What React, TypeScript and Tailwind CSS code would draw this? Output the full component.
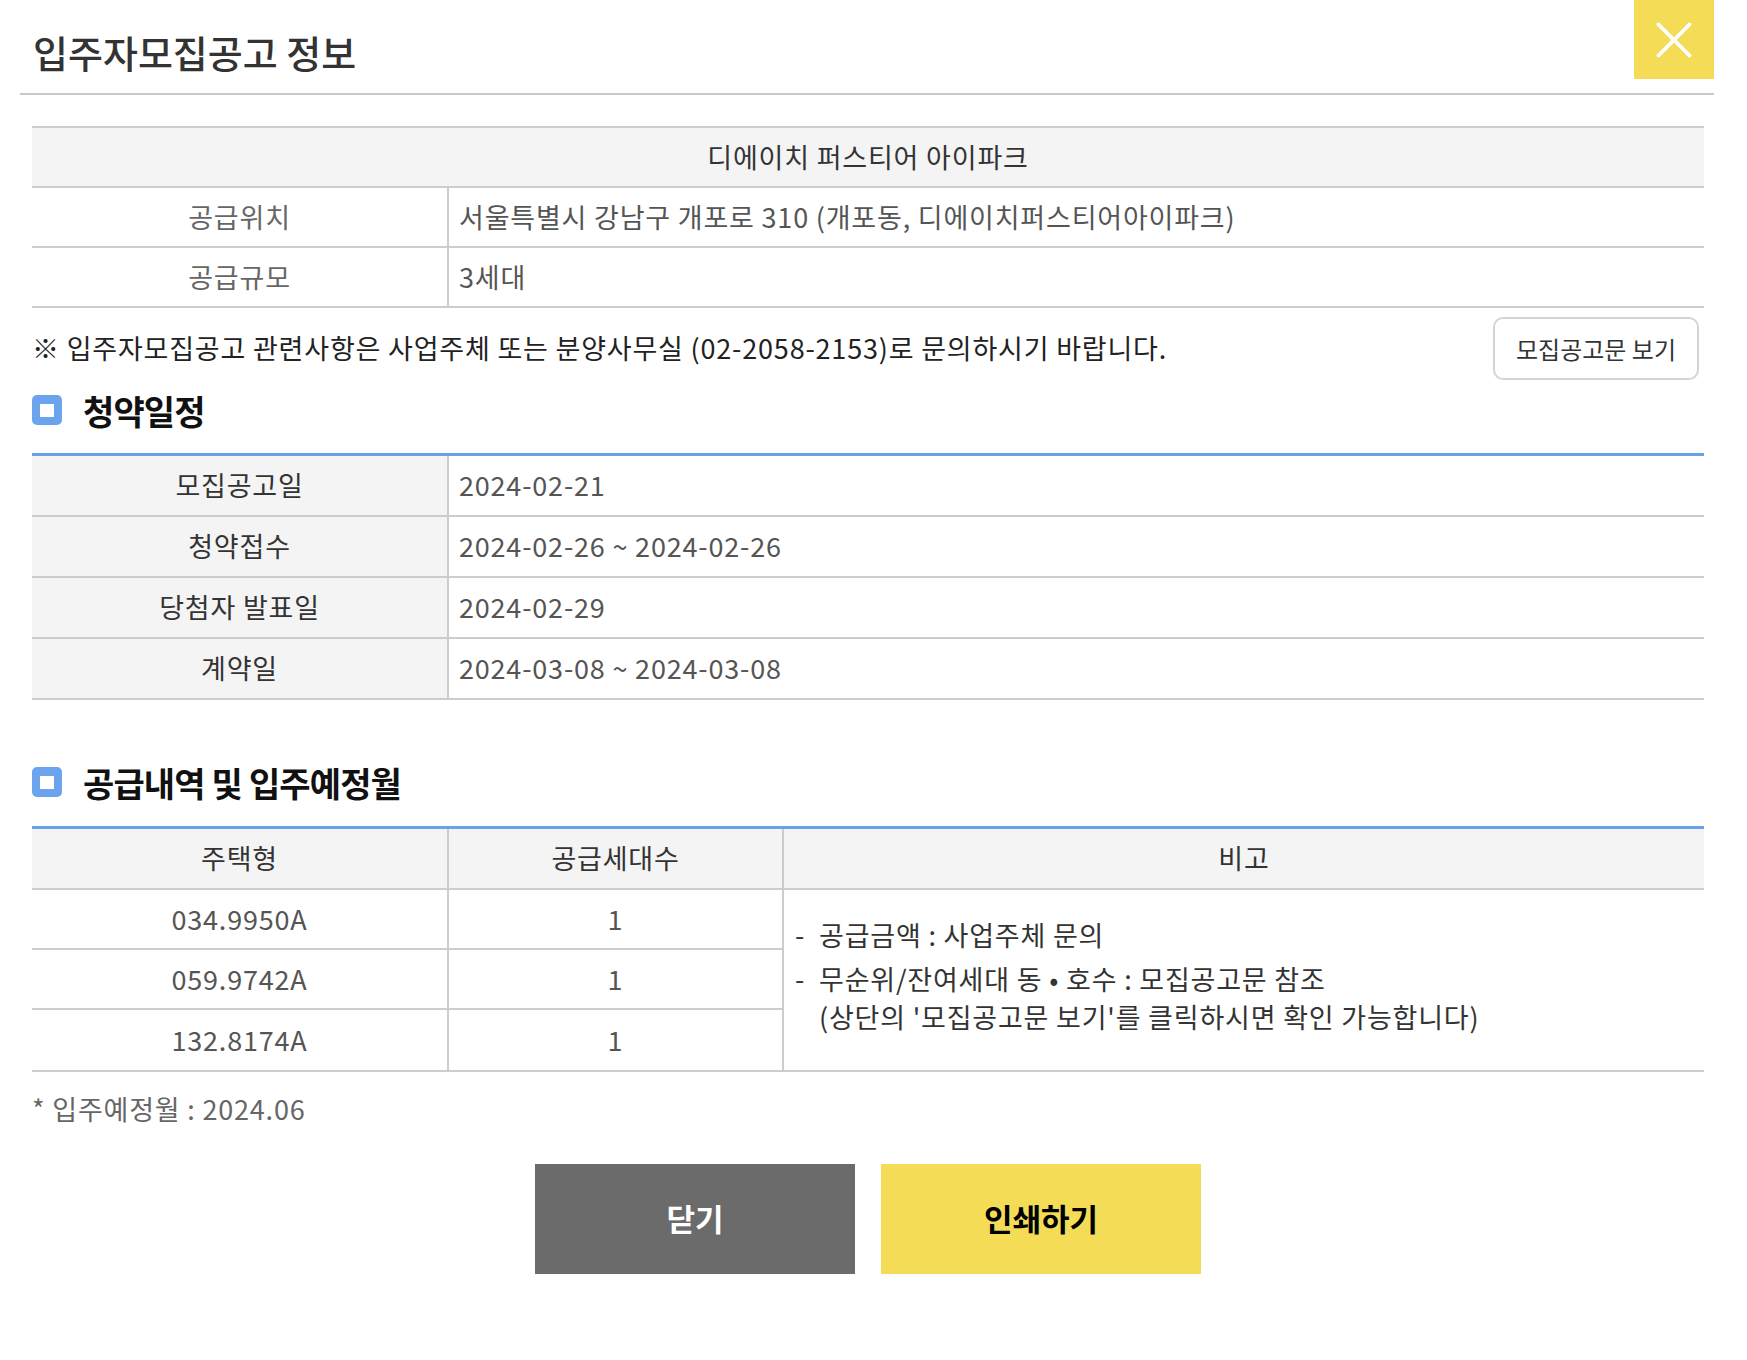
import { X } from "lucide-react";

const schedule = [
  { label: "모집공고일", value: "2024-02-21" },
  { label: "청약접수", value: "2024-02-26 ~ 2024-02-26" },
  { label: "당첨자 발표일", value: "2024-02-29" },
  { label: "계약일", value: "2024-03-08 ~ 2024-03-08" },
];

const supply = [
  { type: "034.9950A", count: "1" },
  { type: "059.9742A", count: "1" },
  { type: "132.8174A", count: "1" },
];

function SectionTitle({ children }: { children: React.ReactNode }) {
  return (
    <div className="flex h-[30px] items-center gap-[21px]">
      <span className="flex size-[30px] items-center justify-center rounded-[5px] bg-[#6ba4ec]">
        <span className="h-[13px] w-[14px] bg-white" />
      </span>
      <h2 className="text-[34px] font-bold tracking-[-0.025em] text-[#111]">{children}</h2>
    </div>
  );
}

export default function App() {
  return (
    <div className="min-h-[1360px] w-[1747px] bg-white font-['Noto_Sans_CJK_KR','Noto_Sans',sans-serif] text-[#333]">
      {/* Header */}
      <header className="ml-[20px] flex h-[95px] w-[1694px] items-start justify-between border-b-2 border-[#c8c8c8]">
        <h1 className="pl-[13px] pt-[24px] text-[38px] font-medium leading-[56px] tracking-normal text-[#333]">
          입주자모집공고 정보
        </h1>
        <button className="flex h-[79px] w-[80px] items-center justify-center bg-[#f4dc56]" aria-label="닫기">
          <X className="size-[62px] text-white" strokeWidth={1.5} />
        </button>
      </header>

      <main className="ml-[32px] w-[1672px] pt-[31px]">
        {/* Complex info */}
        <div className="border-t-2 border-[#cccccc] text-[27px] tracking-[0.8px]">
          <div className="flex h-[60px] items-center justify-center border-b-2 border-[#cccccc] bg-[#f4f4f4] text-[#333]">
            디에이치 퍼스티어 아이파크
          </div>
          <div className="flex h-[60px] border-b-2 border-[#cccccc]">
            <div className="flex w-[417px] items-center justify-center border-r-2 border-[#cccccc] text-[#666]">공급위치</div>
            <div className="flex flex-1 items-center pl-[10px] text-[#555]">
              서울특별시 강남구 개포로 310 (개포동, 디에이치퍼스티어아이파크)
            </div>
          </div>
          <div className="flex h-[60px] border-b-2 border-[#cccccc]">
            <div className="flex w-[417px] items-center justify-center border-r-2 border-[#cccccc] text-[#666]">공급규모</div>
            <div className="flex flex-1 items-center pl-[10px] text-[#555]">3세대</div>
          </div>
        </div>

        {/* Notice */}
        <div className="mt-[9px] flex items-center justify-between pr-[5px]">
          <p className="text-[27px] tracking-[0.8px] text-[#222]">
            ※ 입주자모집공고 관련사항은 사업주체 또는 분양사무실 (02-2058-2153)로 문의하시기 바랍니다.
          </p>
          <button className="h-[63px] w-[206px] rounded-[10px] border-2 border-[#d4d4d4] bg-white text-[24px] tracking-normal text-[#333]">
            모집공고문 보기
          </button>
        </div>

        {/* Schedule */}
        <div className="mt-[15px]">
          <SectionTitle>청약일정</SectionTitle>
        </div>
        <div className="mt-[28px] border-t-[3px] border-[#6aa1e8] text-[27px] tracking-[0.8px]">
          {schedule.map((row) => (
            <div key={row.label} className="flex h-[61px] border-b-2 border-[#cccccc]">
              <div className="flex w-[417px] items-center justify-center border-r-2 border-[#cccccc] bg-[#f4f4f4] text-[#333]">
                {row.label}
              </div>
              <div className="flex flex-1 items-center pl-[10px] text-[#555]">{row.value}</div>
            </div>
          ))}
        </div>

        {/* Supply */}
        <div className="mt-[67px]">
          <SectionTitle>공급내역 및 입주예정월</SectionTitle>
        </div>
        <div className="mt-[29px] border-t-[3px] border-[#6aa1e8] text-[27px] tracking-[0.8px]">
          <div className="flex h-[61px] border-b-2 border-[#cccccc] bg-[#f4f4f4] text-[#333]">
            <div className="flex w-[417px] items-center justify-center border-r-2 border-[#cccccc]">주택형</div>
            <div className="flex w-[335px] items-center justify-center border-r-2 border-[#cccccc]">공급세대수</div>
            <div className="flex flex-1 items-center justify-center">비고</div>
          </div>
          <div className="flex border-b-2 border-[#cccccc]">
            <div className="w-[752px] border-r-2 border-[#cccccc]">
              {supply.map((row, i) => (
                <div
                  key={row.type}
                  className={`flex h-[60px] text-[#555] ${i < supply.length - 1 ? "border-b-2 border-[#cccccc]" : ""}`}
                >
                  <div className="flex w-[417px] items-center justify-center border-r-2 border-[#cccccc]">{row.type}</div>
                  <div className="flex flex-1 items-center justify-center">{row.count}</div>
                </div>
              ))}
            </div>
            <div className="flex flex-1 flex-col justify-center pb-[9px] pl-[11px] leading-[38px] text-[#333]">
              <div className="flex">
                <span className="w-[24px]">-</span>
                <span>공급금액 : 사업주체 문의</span>
              </div>
              <div className="mt-[6px] flex">
                <span className="w-[24px]">-</span>
                <span>
                  무순위/잔여세대 동 • 호수 : 모집공고문 참조
                  <br />
                  (상단의 '모집공고문 보기'를 클릭하시면 확인 가능합니다)
                </span>
              </div>
            </div>
          </div>
        </div>

        <p className="mt-[17px] text-[27px] tracking-[0.8px] text-[#666]">* 입주예정월 : 2024.06</p>

        {/* Buttons */}
        <div className="mt-[34px] flex justify-center gap-[26px]">
          <button className="h-[110px] w-[320px] bg-[#6b6b6b] text-[31px] font-bold tracking-normal text-white">닫기</button>
          <button className="h-[110px] w-[320px] bg-[#f4dc56] text-[31px] font-bold tracking-normal text-black">인쇄하기</button>
        </div>
      </main>
    </div>
  );
}
